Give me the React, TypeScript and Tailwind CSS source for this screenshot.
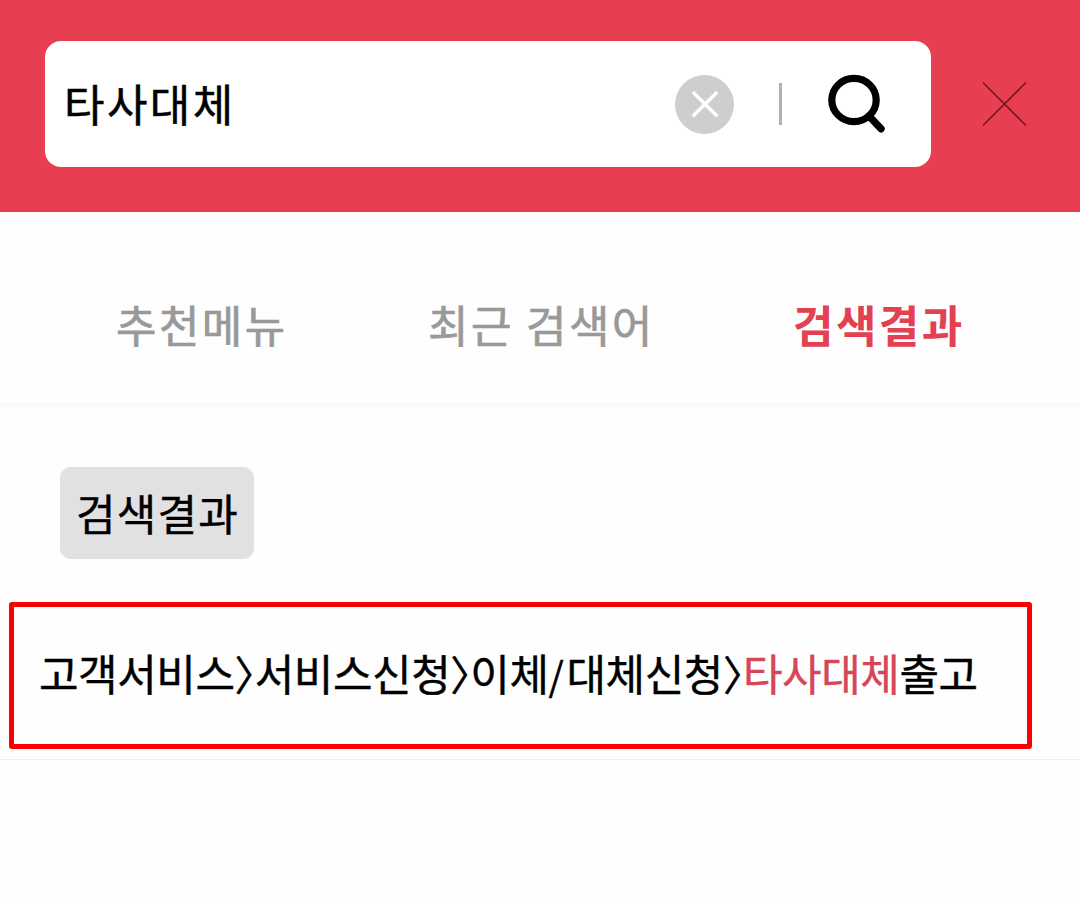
import React from 'react';
import clsx from 'clsx';

interface Tab {
  id: string;
  label: string;
  className: string;
}

const tabs: Tab[] = [
  { id: 'menu', label: '추천메뉴', className: 'pl-[116px] w-[428px]' },
  { id: 'recent', label: '최근 검색어', className: 'w-[365px]' },
  { id: 'result', label: '검색결과', className: '' },
];

const ClearIcon = () => (
  <svg className="h-[60px] w-[60px]" viewBox="0 0 60 60" fill="none">
    <circle cx="30.5" cy="30.5" r="29.5" fill="#cecece" />
    <path d="M18.8 18L43.3 42.3M43.3 18L18.8 42.3" stroke="#fff" strokeWidth="3.4" />
  </svg>
);

const SearchIcon = () => (
  <svg className="h-[60px] w-[60px]" viewBox="0 0 60 60" fill="none" stroke="#000">
    <ellipse cx="27" cy="26" rx="22.2" ry="21.6" strokeWidth="7.2" />
    <path d="M42 42L54 54.8" strokeWidth="7.4" strokeLinecap="round" />
  </svg>
);

const CloseIcon = () => (
  <svg className="h-11 w-11" viewBox="0 0 44 44" fill="none">
    <path d="M0 0.5L43 43.5M43 0.5L0 43.5" stroke="#7b1a27" strokeWidth="1.6" />
  </svg>
);

// 반각 폭의 경로 구분 기호
const Separator = () => <span className="text-[41px] [font-feature-settings:'halt']">〉</span>;

export default function App() {
  const activeTab = 'result';

  return (
    <div className="h-[898px] w-[1080px] overflow-hidden bg-[#fefefe] font-['Noto_Sans_CJK_KR',sans-serif] text-black">
      {/* 검색창 */}
      <header className="flex h-[212px] items-start bg-[#e83e51] pt-[41px] pl-[45px]">
        <div className="flex h-[126px] w-[886px] items-center rounded-2xl bg-white pl-[19px]">
          <span className="w-[610px] pb-[2px] text-[44px] leading-[124px] tracking-[2.4px] [-webkit-text-stroke:0.5px]">
            타사대체
          </span>
          <button type="button" aria-label="지우기">
            <ClearIcon />
          </button>
          <span className="ml-[45px] h-[42px] w-[3px] bg-[#b1b1b1]" />
          <button type="button" aria-label="검색" className="ml-[45px]">
            <SearchIcon />
          </button>
        </div>
        <button type="button" aria-label="닫기" className="mt-[41px] ml-[52px]">
          <CloseIcon />
        </button>
      </header>

      {/* 탭 */}
      <nav className="flex h-[189px] pt-[79px]">
        {tabs.map((tab) => (
          <div
            key={tab.id}
            className={clsx(
              'shrink-0 text-[44px] leading-[66px] tracking-[2.4px] whitespace-nowrap',
              tab.id === activeTab
                ? 'font-bold text-[#e34152]'
                : 'font-normal text-[#999] [-webkit-text-stroke:0.7px]',
              tab.className
            )}
          >
            {tab.label}
          </div>
        ))}
      </nav>
      <div className="h-[6px] bg-linear-to-b from-[#fdfdfd] to-[#f7f7f7]" />

      {/* 검색결과 */}
      <main className="border-b border-[#eee] pt-[60px] pb-[10px]">
        <h2 className="ml-[60px] flex h-[92px] w-[194px] items-center rounded-[11px] bg-[#e1e1e1] pb-[2px] pl-[16px] text-[43px] tracking-[1.2px] [-webkit-text-stroke:0.4px]">
          검색결과
        </h2>
        <div className="mt-[43px] ml-[9px] flex h-[147px] w-[1023px] items-center rounded-[3px] border-[5px] border-[#fa0000] pb-[7px] pl-[25px] text-[43px] tracking-[-0.44px] whitespace-nowrap [-webkit-text-stroke:0.4px]">
          <p>
            고객서비스
            <Separator />
            서비스신청
            <Separator />
            이체
            <span className="mr-[3px] text-[39px]">/</span>
            대체신청
            <Separator />
            <span className="text-[#d54656]">타사대체</span>
            출고
          </p>
        </div>
      </main>
    </div>
  );
}
